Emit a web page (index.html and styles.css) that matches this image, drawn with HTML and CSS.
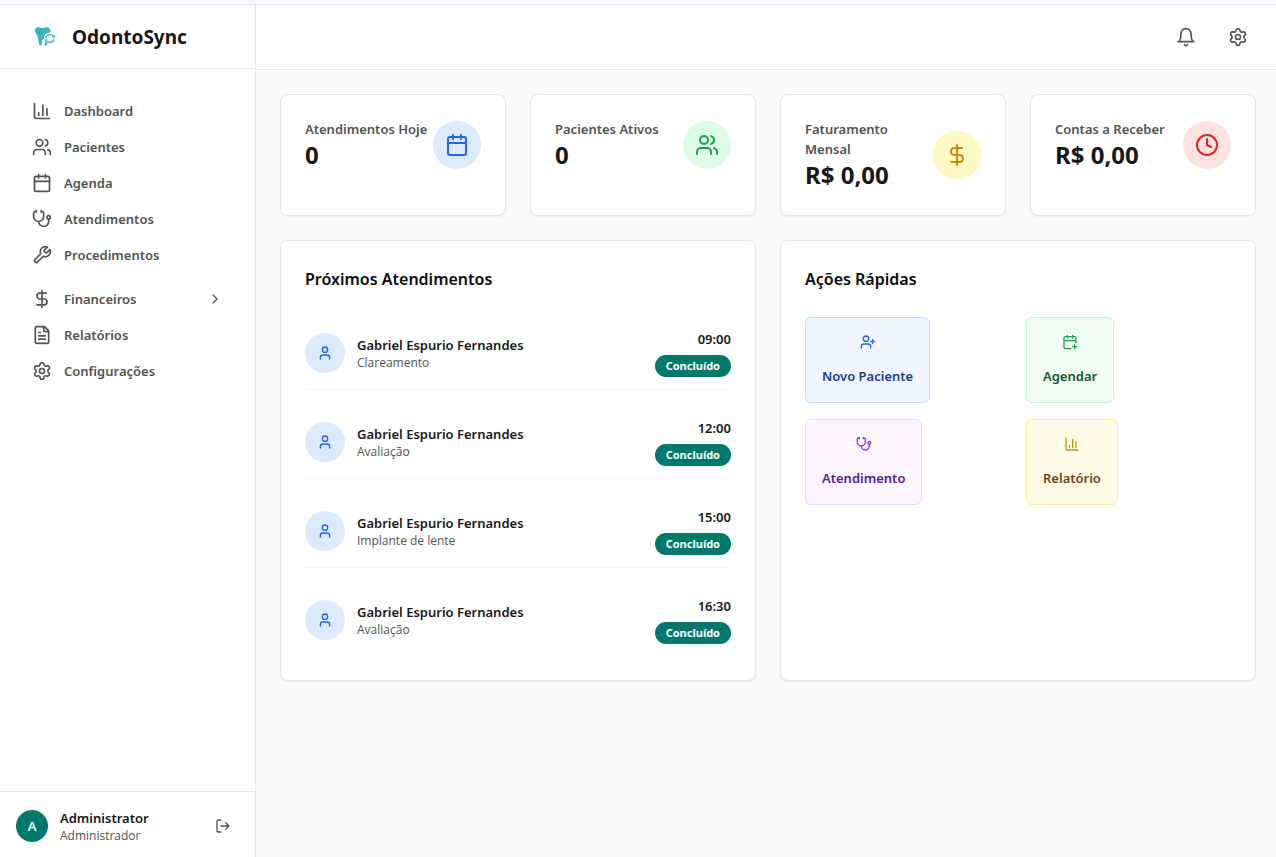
FILE: index.html
```html
<!DOCTYPE html>
<html lang="pt-BR">
<head>
<meta charset="utf-8">
<meta name="viewport" content="width=device-width, initial-scale=1">
<title>OdontoSync</title>
<link rel="stylesheet" href="styles.css">
</head>
<body>
<svg class="sprite" aria-hidden="true">
  <symbol id="i-chart" viewBox="0 0 24 24"><path d="M3 3v16a2 2 0 0 0 2 2h16M18 17V9M13 17V5M8 17v-3"/></symbol>
  <symbol id="i-users" viewBox="0 0 24 24"><path d="M16 21v-2a4 4 0 0 0-4-4H6a4 4 0 0 0-4 4v2M22 21v-2a4 4 0 0 0-3-3.87M16 3.13a4 4 0 0 1 0 7.75"/><circle cx="9" cy="7" r="4"/></symbol>
  <symbol id="i-calendar" viewBox="0 0 24 24"><path d="M8 2v4M16 2v4M3 10h18"/><rect x="3" y="4" width="18" height="18" rx="2"/></symbol>
  <symbol id="i-steth" viewBox="0 0 24 24"><path d="M11 2v2M5 2v2M5 3H4a2 2 0 0 0-2 2v4a6 6 0 0 0 12 0V5a2 2 0 0 0-2-2h-1M8 15a6 6 0 0 0 12 0v-3"/><circle cx="20" cy="10" r="2"/></symbol>
  <symbol id="i-wrench" viewBox="0 0 24 24"><path d="M14.7 6.3a1 1 0 0 0 0 1.4l1.6 1.6a1 1 0 0 0 1.4 0l3.77-3.77a6 6 0 0 1-7.94 7.94l-6.91 6.91a2.12 2.12 0 0 1-3-3l6.91-6.91a6 6 0 0 1 7.94-7.94l-3.76 3.76z"/></symbol>
  <symbol id="i-dollar" viewBox="0 0 24 24"><path d="M12 2v20M17 5H9.5a3.5 3.5 0 0 0 0 7h5a3.5 3.5 0 0 1 0 7H6"/></symbol>
  <symbol id="i-file" viewBox="0 0 24 24"><path d="M15 2H6a2 2 0 0 0-2 2v16a2 2 0 0 0 2 2h12a2 2 0 0 0 2-2V7ZM14 2v4a2 2 0 0 0 2 2h4M10 9H8M16 13H8M16 17H8"/></symbol>
  <symbol id="i-gear" viewBox="0 0 24 24"><path d="M9.671 4.136a2.34 2.34 0 0 1 4.659 0 2.34 2.34 0 0 0 3.319 1.915 2.34 2.34 0 0 1 2.33 4.033 2.34 2.34 0 0 0 0 3.831 2.34 2.34 0 0 1-2.33 4.033 2.34 2.34 0 0 0-3.319 1.915 2.34 2.34 0 0 1-4.659 0 2.34 2.34 0 0 0-3.32-1.915 2.34 2.34 0 0 1-2.33-4.033 2.34 2.34 0 0 0 0-3.831A2.34 2.34 0 0 1 6.35 6.051a2.34 2.34 0 0 0 3.319-1.915"/><circle cx="12" cy="12" r="3"/></symbol>
  <symbol id="i-bell" viewBox="0 0 24 24"><path d="M10.300 21.500a2.200 2.200 0 0 0 3.400 0M2.500 17.500h19M4 17.500c1-2 2-4 2-9.500a6 6 0 0 1 12 0c0 5.500 1 7.500 2 9.500"/></symbol>
  <symbol id="i-chevron" viewBox="0 0 24 24"><path d="m9 18 6-6-6-6"/></symbol>
  <symbol id="i-logout" viewBox="0 0 24 24"><path d="M9 21H5a2 2 0 0 1-2-2V5a2 2 0 0 1 2-2h4M16 17l5-5-5-5M21 12H9"/></symbol>
  <symbol id="i-clock" viewBox="0 0 24 24"><circle cx="12" cy="12" r="10"/><path d="M12 6v6l4 2"/></symbol>
  <symbol id="i-user" viewBox="0 0 24 24"><path d="M19 21v-2a4 4 0 0 0-4-4H9a4 4 0 0 0-4 4v2"/><circle cx="12" cy="7" r="4"/></symbol>
  <symbol id="i-user-plus" viewBox="0 0 24 24"><path d="M16 21v-2a4 4 0 0 0-4-4H6a4 4 0 0 0-4 4v2M19 8v6M22 11h-6"/><circle cx="9" cy="7" r="4"/></symbol>
  <symbol id="i-cal-plus" viewBox="0 0 24 24"><path d="M8 2v4M16 2v4M21 13V6a2 2 0 0 0-2-2H5a2 2 0 0 0-2 2v14a2 2 0 0 0 2 2h8M3 10h18M16 19h6M19 16v6"/></symbol>
</svg>

<div class="app">
  <aside class="sidebar">
    <div class="brand">
      <svg class="brand-logo" viewBox="0 0 24 24" aria-hidden="true">
        <path class="tooth" d="M3 5.500C3 3.500 4.500 2 6.800 2.200c1.500.2 2.200.8 3.700.8s2.300-.6 3.900-.8c2.300-.2 4.100 1.200 4.100 3.800 0 .7-.1 1.200-.3 1.700-3.800-.4-6.600 2.400-6.200 6-.9.300-1.500 1-1.700 2.300-.3 2.300-.5 4.600-1.800 4.600-1.700-.2-1.900-4.600-2.600-8.100C5.500 9.500 3 8.700 3 5.500z"/>
        <path class="tooth" d="M13 16c.7 1 1.500 1.700 2.600 2.100-.4 1.400-1 2.700-1.800 2.700-1.200 0-1-2.900-.8-4.800z"/>
        <path class="ring" d="M13.600 12.800a4.300 4.300 0 0 1 7.900-1.200M22 14a4.300 4.300 0 0 1-7.900 1.300"/>
        <path class="ring-tip" d="M23 9.800v2.900h-3.200zM12.700 17v-2.900h3.200z"/>
      </svg>
      <span class="brand-name">OdontoSync</span>
    </div>
    <nav class="nav" aria-label="Principal">
      <a class="nav-item" href="#"><svg class="icon-20"><use href="#i-chart"/></svg>Dashboard</a>
      <a class="nav-item" href="#"><svg class="icon-20"><use href="#i-users"/></svg>Pacientes</a>
      <a class="nav-item" href="#"><svg class="icon-20"><use href="#i-calendar"/></svg>Agenda</a>
      <a class="nav-item" href="#"><svg class="icon-20"><use href="#i-steth"/></svg>Atendimentos</a>
      <a class="nav-item" href="#"><svg class="icon-20"><use href="#i-wrench"/></svg>Procedimentos</a>
      <button class="nav-item nav-group" type="button" aria-expanded="false"><svg class="icon-20"><use href="#i-dollar"/></svg><span class="nav-label">Financeiros</span><svg class="icon-16"><use href="#i-chevron"/></svg></button>
      <a class="nav-item" href="#"><svg class="icon-20"><use href="#i-file"/></svg>Relatórios</a>
      <a class="nav-item" href="#"><svg class="icon-20"><use href="#i-gear"/></svg>Configurações</a>
    </nav>
    <div class="account">
      <span class="account-avatar">A</span>
      <div class="person">
        <span class="person-name">Administrator</span>
        <span class="person-note">Administrador</span>
      </div>
      <button class="icon-button" type="button" aria-label="Sair"><svg class="icon-16"><use href="#i-logout"/></svg></button>
    </div>
  </aside>

  <div class="page">
    <header class="topbar">
      <button class="icon-button" type="button" aria-label="Notificações"><svg class="icon-20"><use href="#i-bell"/></svg></button>
      <button class="icon-button" type="button" aria-label="Configurações"><svg class="icon-20"><use href="#i-gear"/></svg></button>
    </header>
    <main class="content">
      <section class="stats">
        <article class="card stat">
          <div><h2 class="stat-title">Atendimentos Hoje</h2><p class="stat-value">0</p></div>
          <span class="stat-icon blue"><svg class="icon-24"><use href="#i-calendar"/></svg></span>
        </article>
        <article class="card stat">
          <div><h2 class="stat-title">Pacientes Ativos</h2><p class="stat-value">0</p></div>
          <span class="stat-icon green"><svg class="icon-24"><use href="#i-users"/></svg></span>
        </article>
        <article class="card stat">
          <div><h2 class="stat-title">Faturamento<br>Mensal</h2><p class="stat-value">R$ 0,00</p></div>
          <span class="stat-icon yellow"><svg class="icon-24"><use href="#i-dollar"/></svg></span>
        </article>
        <article class="card stat">
          <div><h2 class="stat-title">Contas a Receber</h2><p class="stat-value">R$ 0,00</p></div>
          <span class="stat-icon red"><svg class="icon-24"><use href="#i-clock"/></svg></span>
        </article>
      </section>

      <div class="panels">
        <section class="card">
          <h2 class="panel-title">Próximos Atendimentos</h2>
          <ul class="visits">
            <li class="visit">
              <span class="visit-avatar"><svg class="icon-16"><use href="#i-user"/></svg></span>
              <div class="person"><span class="person-name">Gabriel Espurio Fernandes</span><span class="person-note">Clareamento</span></div>
              <div class="visit-status"><time class="visit-time">09:00</time><span class="badge">Concluído</span></div>
            </li>
            <li class="visit">
              <span class="visit-avatar"><svg class="icon-16"><use href="#i-user"/></svg></span>
              <div class="person"><span class="person-name">Gabriel Espurio Fernandes</span><span class="person-note">Avaliação</span></div>
              <div class="visit-status"><time class="visit-time">12:00</time><span class="badge">Concluído</span></div>
            </li>
            <li class="visit">
              <span class="visit-avatar"><svg class="icon-16"><use href="#i-user"/></svg></span>
              <div class="person"><span class="person-name">Gabriel Espurio Fernandes</span><span class="person-note">Implante de lente</span></div>
              <div class="visit-status"><time class="visit-time">15:00</time><span class="badge">Concluído</span></div>
            </li>
            <li class="visit">
              <span class="visit-avatar"><svg class="icon-16"><use href="#i-user"/></svg></span>
              <div class="person"><span class="person-name">Gabriel Espurio Fernandes</span><span class="person-note">Avaliação</span></div>
              <div class="visit-status"><time class="visit-time">16:30</time><span class="badge">Concluído</span></div>
            </li>
          </ul>
        </section>

        <section class="card">
          <h2 class="panel-title">Ações Rápidas</h2>
          <div class="actions">
            <button class="action action-blue" type="button"><svg class="icon-16"><use href="#i-user-plus"/></svg><span>Novo Paciente</span></button>
            <button class="action action-green" type="button"><svg class="icon-16"><use href="#i-cal-plus"/></svg><span>Agendar</span></button>
            <button class="action action-purple" type="button"><svg class="icon-16"><use href="#i-steth"/></svg><span>Atendimento</span></button>
            <button class="action action-yellow" type="button"><svg class="icon-16"><use href="#i-chart"/></svg><span>Relatório</span></button>
          </div>
        </section>
      </div>
    </main>
  </div>
</div>
</body>
</html>
```
FILE: styles.css
```css
* { box-sizing: border-box; }

body {
  margin: 0;
  min-height: 100vh;
  display: flex;
  flex-direction: column;
  border-top: 4px solid #f8f7fd;
  background: #fafafa;
  color: #171717;
  font-family: "Segoe UI", "Noto Sans", "Open Sans", sans-serif;
  font-size: 13px;
  line-height: 20px;
}

h2, p, ul { margin: 0; padding: 0; }

button {
  font: inherit;
  color: inherit;
  background: none;
  border: 0;
  padding: 0;
  cursor: pointer;
}

svg {
  fill: none;
  stroke: currentColor;
  stroke-width: 2;
  stroke-linecap: round;
  stroke-linejoin: round;
  flex-shrink: 0;
}

.sprite { display: none; }
.icon-16 { width: 16px; height: 16px; }
.icon-20 { width: 20px; height: 20px; }
.icon-24 { width: 24px; height: 24px; }

.app {
  flex: 1;
  display: flex;
  border-top: 1px solid #e2e3ee;
}

.sidebar {
  width: 256px;
  flex-shrink: 0;
  display: flex;
  flex-direction: column;
  background: #ffffff;
  border-right: 1px solid #e5e5e5;
}

.brand {
  height: 64px;
  display: flex;
  align-items: center;
  gap: 16px;
  padding: 0 32px;
  border-bottom: 1px solid #e5e5e5;
}

.brand-logo { width: 24px; height: 24px; }
.tooth { fill: #3bb4b4; stroke: none; }
.ring { stroke: #4dbcbc; stroke-width: 1.5; stroke-linecap: butt; }
.ring-tip { fill: #4dbcbc; stroke: none; }

.brand-name {
  font-size: 19px;
  line-height: 28px;
  font-weight: 700;
}

.nav {
  flex: 1;
  display: flex;
  flex-direction: column;
  padding: 24px 16px;
}

.nav-item {
  display: flex;
  align-items: center;
  gap: 12px;
  padding: 8px 16px;
  color: #525252;
  font-weight: 600;
  text-align: left;
  text-decoration: none;
}

.nav-group { margin-top: 8px; }
.nav-label { flex: 1; }

.account {
  display: flex;
  align-items: center;
  gap: 12px;
  padding: 16px 16px 13px;
  border-top: 1px solid #e5e5e5;
}

.account-avatar {
  width: 32px;
  height: 32px;
  display: grid;
  place-items: center;
  border-radius: 50%;
  background: #00796b;
  color: #ffffff;
  font-weight: 600;
}

.person {
  flex: 1;
  display: flex;
  flex-direction: column;
}

.person-name { font-weight: 600; }

.person-note {
  color: #525252;
  font-family: "Segoe UI", "Open Sans", sans-serif;
  font-size: 12px;
  line-height: 16px;
}

.icon-button {
  display: grid;
  padding: 8px;
  color: #525252;
}

.page {
  flex: 1;
  min-width: 0;
}

.topbar {
  height: 65px;
  display: flex;
  align-items: center;
  justify-content: flex-end;
  gap: 16px;
  padding: 0 20px;
  background: #ffffff;
  border-bottom: 1px solid #e5e5e5;
}

.content {
  display: grid;
  gap: 24px;
  padding: 24px 20px 24px 24px;
}

.stats {
  display: grid;
  grid-template-columns: repeat(4, 1fr);
  gap: 24px;
}

.panels {
  display: grid;
  grid-template-columns: repeat(2, 1fr);
  gap: 24px;
}

.card {
  padding: 24px;
  background: #ffffff;
  border: 1px solid #e5e5e5;
  border-radius: 8px;
  box-shadow: 0 1px 2px rgba(0, 0, 0, 0.05);
}

.stat {
  display: grid;
  grid-template-columns: 1fr auto;
  align-items: center;
  align-content: start;
}

.stat-title {
  color: #525252;
  font-size: 13px;
  line-height: 20px;
  font-weight: 600;
}

.stat-value {
  font-size: 24px;
  line-height: 32px;
  font-weight: 700;
}

.stat-icon {
  width: 48px;
  height: 48px;
  display: grid;
  place-items: center;
  border-radius: 50%;
}

.blue { background: #dbeafe; color: #2563eb; }
.green { background: #dcfce7; color: #16a34a; }
.yellow { background: #fef9c3; color: #ca8a04; }
.red { background: #fee2e2; color: #dc2626; }

.panel-title {
  margin-bottom: 24px;
  color: #0a0a0a;
  font-size: 16px;
  line-height: 28px;
  font-weight: 600;
}

.visits {
  display: grid;
  gap: 16px;
  list-style: none;
}

.visit {
  display: flex;
  align-items: center;
  gap: 12px;
  padding: 12px 0;
  border-bottom: 1px solid #f5f5f5;
}

.visit:last-child { border-bottom: 0; }

.visit-avatar {
  width: 40px;
  height: 40px;
  display: grid;
  place-items: center;
  border-radius: 50%;
  background: #dbeafe;
  color: #2563eb;
}

.visit-status {
  display: flex;
  flex-direction: column;
  align-items: flex-end;
  gap: 6px;
}

.visit-time { font-weight: 600; }

.badge {
  padding: 3px 11px;
  border-radius: 11px;
  background: #00796b;
  color: #ffffff;
  font-size: 11px;
  line-height: 16px;
  font-weight: 700;
}

.actions {
  display: grid;
  grid-template-columns: repeat(2, 1fr);
  gap: 16px;
  justify-items: start;
}

.action {
  display: flex;
  flex-direction: column;
  align-items: center;
  gap: 16px;
  padding: 16px;
  border: 1px solid;
  border-radius: 6px;
  font-weight: 600;
}

.action-blue { background: #eff6ff; border-color: #bfdbfe; color: #1e3a8a; }
.action-blue svg { color: #2563eb; }
.action-green { background: #f0fdf4; border-color: #bbf7d0; color: #14532d; }
.action-green svg { color: #16a34a; }
.action-purple { background: #faf5ff; border-color: #e9d5ff; color: #581c87; }
.action-purple svg { color: #9333ea; }
.action-yellow { background: #fefce8; border-color: #fef08a; color: #713f12; }
.action-yellow svg { color: #ca8a04; }
```
